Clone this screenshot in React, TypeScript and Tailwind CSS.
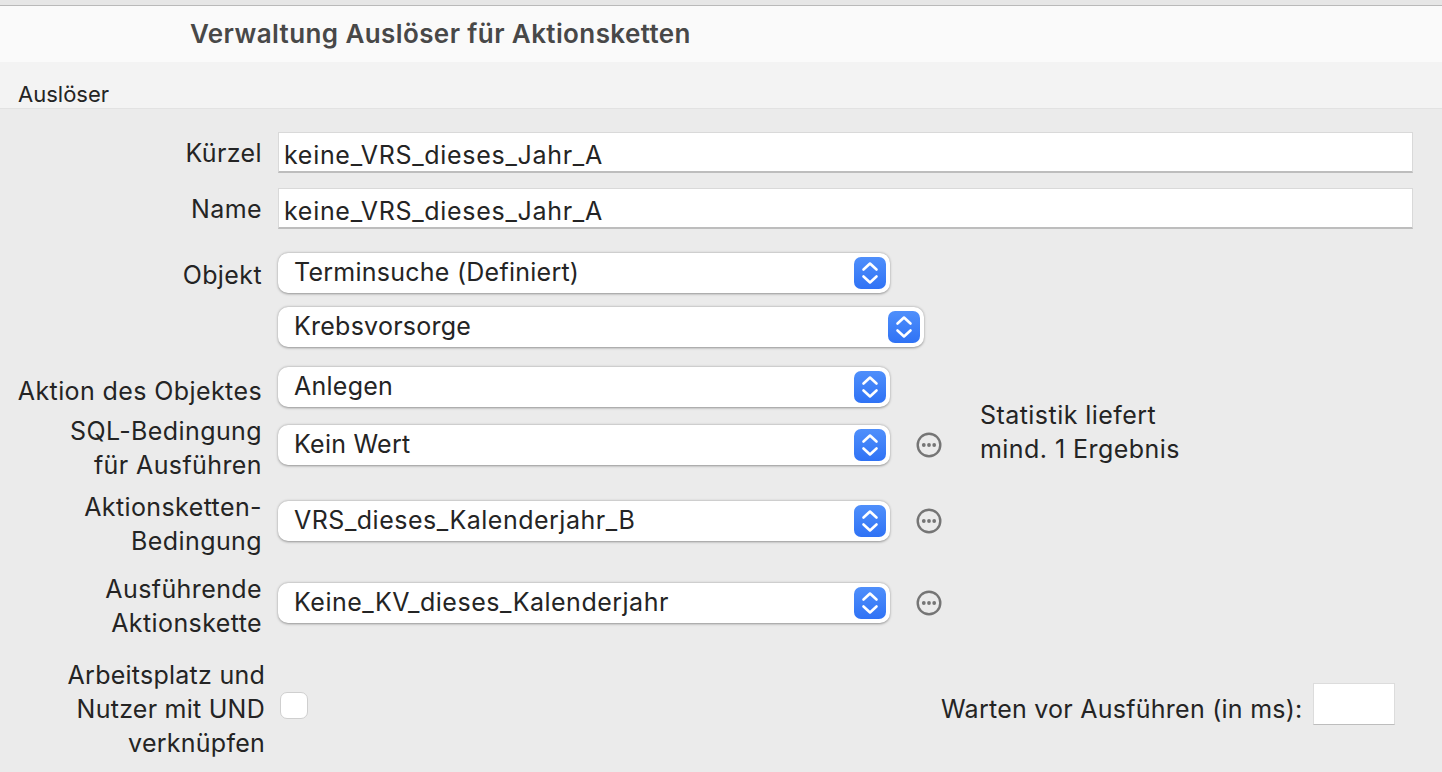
import React from 'react';

const Stepper = () => (
  <span className="flex h-[32px] w-[32px] shrink-0 items-center justify-center rounded-[7px] bg-gradient-to-b from-[#4f8ffb] to-[#2f72f5]">
    <svg width="20" height="26" viewBox="0 0 20 26" fill="none" stroke="#fff" strokeWidth="2.6" strokeLinecap="round" strokeLinejoin="round">
      <path d="M3.5 9.5 10 3.5l6.5 6" />
      <path d="M3.5 16.5 10 22.5l6.5-6" />
    </svg>
  </span>
);

const MoreButton = () => (
  <svg className="ml-[10px] shrink-0" width="26" height="26" viewBox="0 0 26 26" fill="none">
    <circle cx="13" cy="13" r="11.3" stroke="#757575" strokeWidth="2.4" />
    <circle cx="7.8" cy="13" r="1.9" fill="#757575" />
    <circle cx="13" cy="13" r="1.9" fill="#757575" />
    <circle cx="18.2" cy="13" r="1.9" fill="#757575" />
  </svg>
);

const Select = ({ value, width, wide }: { value: string; width: string; wide?: boolean }) => (
  <div
    className={`flex ${width} h-[40px] shrink-0 items-center justify-between rounded-[10px] bg-white pl-[16px] pr-[4px] shadow-[0_0.5px_2.5px_rgba(0,0,0,0.38)]`}
  >
    <span className={wide ? 'tracking-[0.5px]' : ''}>{value}</span>
    <Stepper />
  </div>
);

const Label = ({ lines }: { lines: string[] }) => (
  <div className="w-[262px] shrink-0 text-right leading-[34px] tracking-[0.4px]">
    {lines.map((l) => (
      <div key={l}>{l}</div>
    ))}
  </div>
);

const TextInput = ({ value }: { value: string }) => (
  <div className="flex h-[41px] w-[1135px] items-center border border-[#d9d9d9] border-b-2 border-b-[#bdbdbd] bg-white pl-[5px] pt-[8px] tracking-[0.7px]">
    {value}
  </div>
);

export default function App() {
  return (
    <div className="h-[772px] w-[1442px] overflow-hidden bg-[#ebebeb] font-['Inter','Liberation_Sans',sans-serif] text-[25px] tracking-[0.25px] text-[#242424]">
      <div className="h-[5px] bg-[#e6e6e6]" />
      <div className="h-[1px] bg-[#b9b9b9]" />
      <div className="flex h-[56px] items-center bg-[#fafafa] pb-[2px] pl-[190px] text-[26px] font-semibold tracking-[0.4px] text-[#484848]">
        Verwaltung Auslöser für Aktionsketten
      </div>
      <div className="flex h-[47px] items-end border-b border-[#e2e2e2] bg-[#f3f3f3] pl-[18px] text-[22px] leading-[28px] tracking-normal">
        Auslöser
      </div>

      <div className="flex flex-col pt-[23px]">
        <div className="flex items-center gap-[16px]">
          <Label lines={['Kürzel']} />
          <TextInput value="keine_VRS_dieses_Jahr_A" />
        </div>
        <div className="mt-[15px] flex items-center gap-[16px]">
          <Label lines={['Name']} />
          <TextInput value="keine_VRS_dieses_Jahr_A" />
        </div>

        <div className="mt-[24px] flex items-start gap-[16px]">
          <div className="w-[262px] pt-[5px] text-right leading-[34px] tracking-[0.4px]">Objekt</div>
          <div className="flex flex-col gap-[14px]">
            <Select value="Terminsuche (Definiert)" width="w-[612px]" />
            <Select value="Krebsvorsorge" width="w-[646px]" />
          </div>
        </div>

        <div className="mt-[20px] flex items-start">
          <div className="flex flex-col">
            <div className="flex items-start gap-[16px]">
              <div className="w-[262px] pt-[7px] text-right leading-[34px] tracking-[0.4px]">Aktion des Objektes</div>
              <Select value="Anlegen" width="w-[612px]" />
            </div>
            <div className="mt-[6px] flex items-center gap-[16px]">
              <Label lines={['SQL-Bedingung', 'für Ausführen']} />
              <div className="mb-[6px] flex items-center gap-[16px]">
                <Select value="Kein Wert" width="w-[612px]" />
                <MoreButton />
              </div>
            </div>
          </div>
          <div className="ml-[38px] pt-[31px] leading-[34px] tracking-[0.45px]">
            <div>Statistik liefert</div>
            <div>mind. 1 Ergebnis</div>
          </div>
        </div>

        <div className="mt-[8px] flex items-center gap-[16px]">
          <Label lines={['Aktionsketten-', 'Bedingung']} />
          <div className="mb-[6px] flex items-center gap-[16px]">
            <Select value="VRS_dieses_Kalenderjahr_B" width="w-[612px]" wide />
            <MoreButton />
          </div>
        </div>
        <div className="mt-[14px] flex items-center gap-[16px]">
          <Label lines={['Ausführende', 'Aktionskette']} />
          <div className="mb-[6px] flex items-center gap-[16px]">
            <Select value="Keine_KV_dieses_Kalenderjahr" width="w-[612px]" wide />
            <MoreButton />
          </div>
        </div>

        <div className="mt-[18px] flex items-center">
          <div className="w-[265px] shrink-0 text-right leading-[34px]">
            <div>Arbeitsplatz und</div>
            <div>Nutzer mit UND</div>
            <div>verknüpfen</div>
          </div>
          <div className="mb-[7px] ml-[15px] h-[27px] w-[28px] rounded-[7px] border border-[#cfcfcf] bg-white" />
          <div className="ml-[633px] mt-[2px] whitespace-nowrap">Warten vor Ausführen (in ms):</div>
          <div className="mb-[10px] ml-[10px] h-[42px] w-[82px] border border-[#dcdcdc] border-b-[#bdbdbd] bg-white" />
        </div>
      </div>
    </div>
  );
}
